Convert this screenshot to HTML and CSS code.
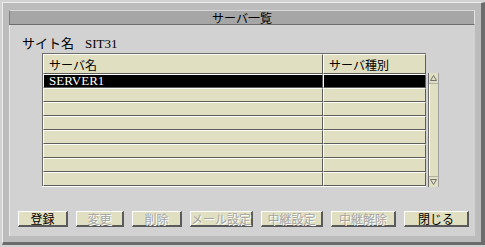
FILE: index.html
```html
<!DOCTYPE html>
<html>
<head>
<meta charset="utf-8">
<title>サーバ一覧</title>
<link rel="stylesheet" href="styles.css">
</head>
<body>
<div class="window">
  <div class="title">サーバ一覧</div>
  <div class="panel">
    <div class="site">サイト名<span class="site-name">SIT31</span></div>
    <div class="list">
      <div class="grid">
        <div class="cell head">サーバ名</div><div class="cell head">サーバ種別</div>
        <div class="cell sel">SERVER1</div><div class="cell sel"></div>
        <div class="cell"></div><div class="cell"></div>
        <div class="cell"></div><div class="cell"></div>
        <div class="cell"></div><div class="cell"></div>
        <div class="cell"></div><div class="cell"></div>
        <div class="cell"></div><div class="cell"></div>
        <div class="cell"></div><div class="cell"></div>
        <div class="cell"></div><div class="cell"></div>
      </div>
      <div class="scroll">
        <div class="arrow"><svg width="7" height="6" viewBox="0 0 7 6"><path d="M3.5 0.5 L6.5 5.5 L0.5 5.5 Z" fill="none" stroke="#707070"/></svg></div>
        <div class="track"></div>
        <div class="arrow"><svg width="7" height="6" viewBox="0 0 7 6"><path d="M0.5 0.5 L6.5 0.5 L3.5 5.5 Z" fill="none" stroke="#707070"/></svg></div>
      </div>
    </div>
    <div class="buttons">
      <button class="btn w50">登録</button>
      <button class="btn w48" disabled>変更</button>
      <button class="btn w50" disabled>削除</button>
      <button class="btn w63" disabled>メール設定</button>
      <button class="btn w62" disabled>中継設定</button>
      <button class="btn w65" disabled>中継解除</button>
      <button class="btn w65">閉じる</button>
    </div>
  </div>
</div>
</body>
</html>
```

FILE: styles.css
```css
body { margin: 0; background: #d2d2d2; font: 12px/14px "Noto Sans CJK JP", sans-serif; color: #000; }
.window { box-sizing: border-box; width: 483px; height: 243px; margin: 2px 0 0 2px; padding: 7px 6px 6px 6px; background: #bcbcbc; border-style: solid; border-width: 1px 4px 3px 1px; border-color: #ececec #6c6c6c #6c6c6c #ececec; display: flex; flex-direction: column; }
.title { box-sizing: border-box; height: 15px; background: #a6a6a6; border-style: solid; border-width: 1px; border-color: #d8d8d8 #e4e4e4 #6c6c6c #808080; text-align: center; font-size: 12px; line-height: 13px; }
.panel { flex: 1; background: #d2d2d2; border-left: 1px solid #e8e8e8; display: flex; flex-direction: column; }
.site { margin: 11px 0 0 12px; font-size: 13px; line-height: 14px; height: 14px; }
.site-name { margin-left: 11px; font-family: "Liberation Serif", serif; font-size: 13px; }
.list { display: flex; align-items: flex-start; margin: 3px 0 0 32px; }
.grid { display: grid; grid-template-columns: 280px 103px; grid-auto-rows: 14px; border-left: 1px solid #6c6c6c; border-top: 1px solid #6c6c6c; box-shadow: 0 1px 0 #fff; }
.cell { box-sizing: border-box; background: #e1dfc1; border-top: 1px solid #fcfcf4; border-bottom: 1px solid #5c5c5c; border-right: 1px solid #5c5c5c; border-left: 1px solid #fff; padding-left: 5px; line-height: 12px; overflow: hidden; white-space: nowrap; }
.cell.head { height: 20px; line-height: 17px; padding-top: 1px; }
.grid .cell.head { grid-row: 1; }
.grid { grid-template-rows: 20px; }
.cell.sel { background: #000; color: #fff; border-top-color: #fff; font-family: "Liberation Serif", serif; font-size: 13px; line-height: 12px; }
.scroll { box-sizing: border-box; width: 11px; height: 114px; margin: 20px 0 0 2px; background: #e1dfc1; border-left: 1px solid #6c6c6c; border-right: 1px solid #a0a0a0; display: flex; flex-direction: column; }
.arrow { height: 10px; display: flex; align-items: center; justify-content: center; border-bottom: 1px solid #b0b0a0; }
.arrow:last-child { border-bottom: none; border-top: 1px solid #b0b0a0; }
.track { flex: 1; border-left: 1px solid #fff; }
.buttons { display: flex; gap: 8px; margin: 24px 0 0 8px; }
.btn { box-sizing: border-box; height: 16px; padding: 0; background: #e1dfc1; border-style: solid; border-width: 1px 2px 2px 1px; border-color: #fff #5a5a5a #5a5a5a #fff; font: 12px/12px "Noto Sans CJK JP", sans-serif; color: #000; }
.btn:disabled { color: #a4a4a4; text-shadow: 1px 1px 0 #fff; }
.w48 { width: 48px; }
.w50 { width: 50px; }
.w62 { width: 62px; }
.w63 { width: 63px; }
.w65 { width: 65px; }
```
